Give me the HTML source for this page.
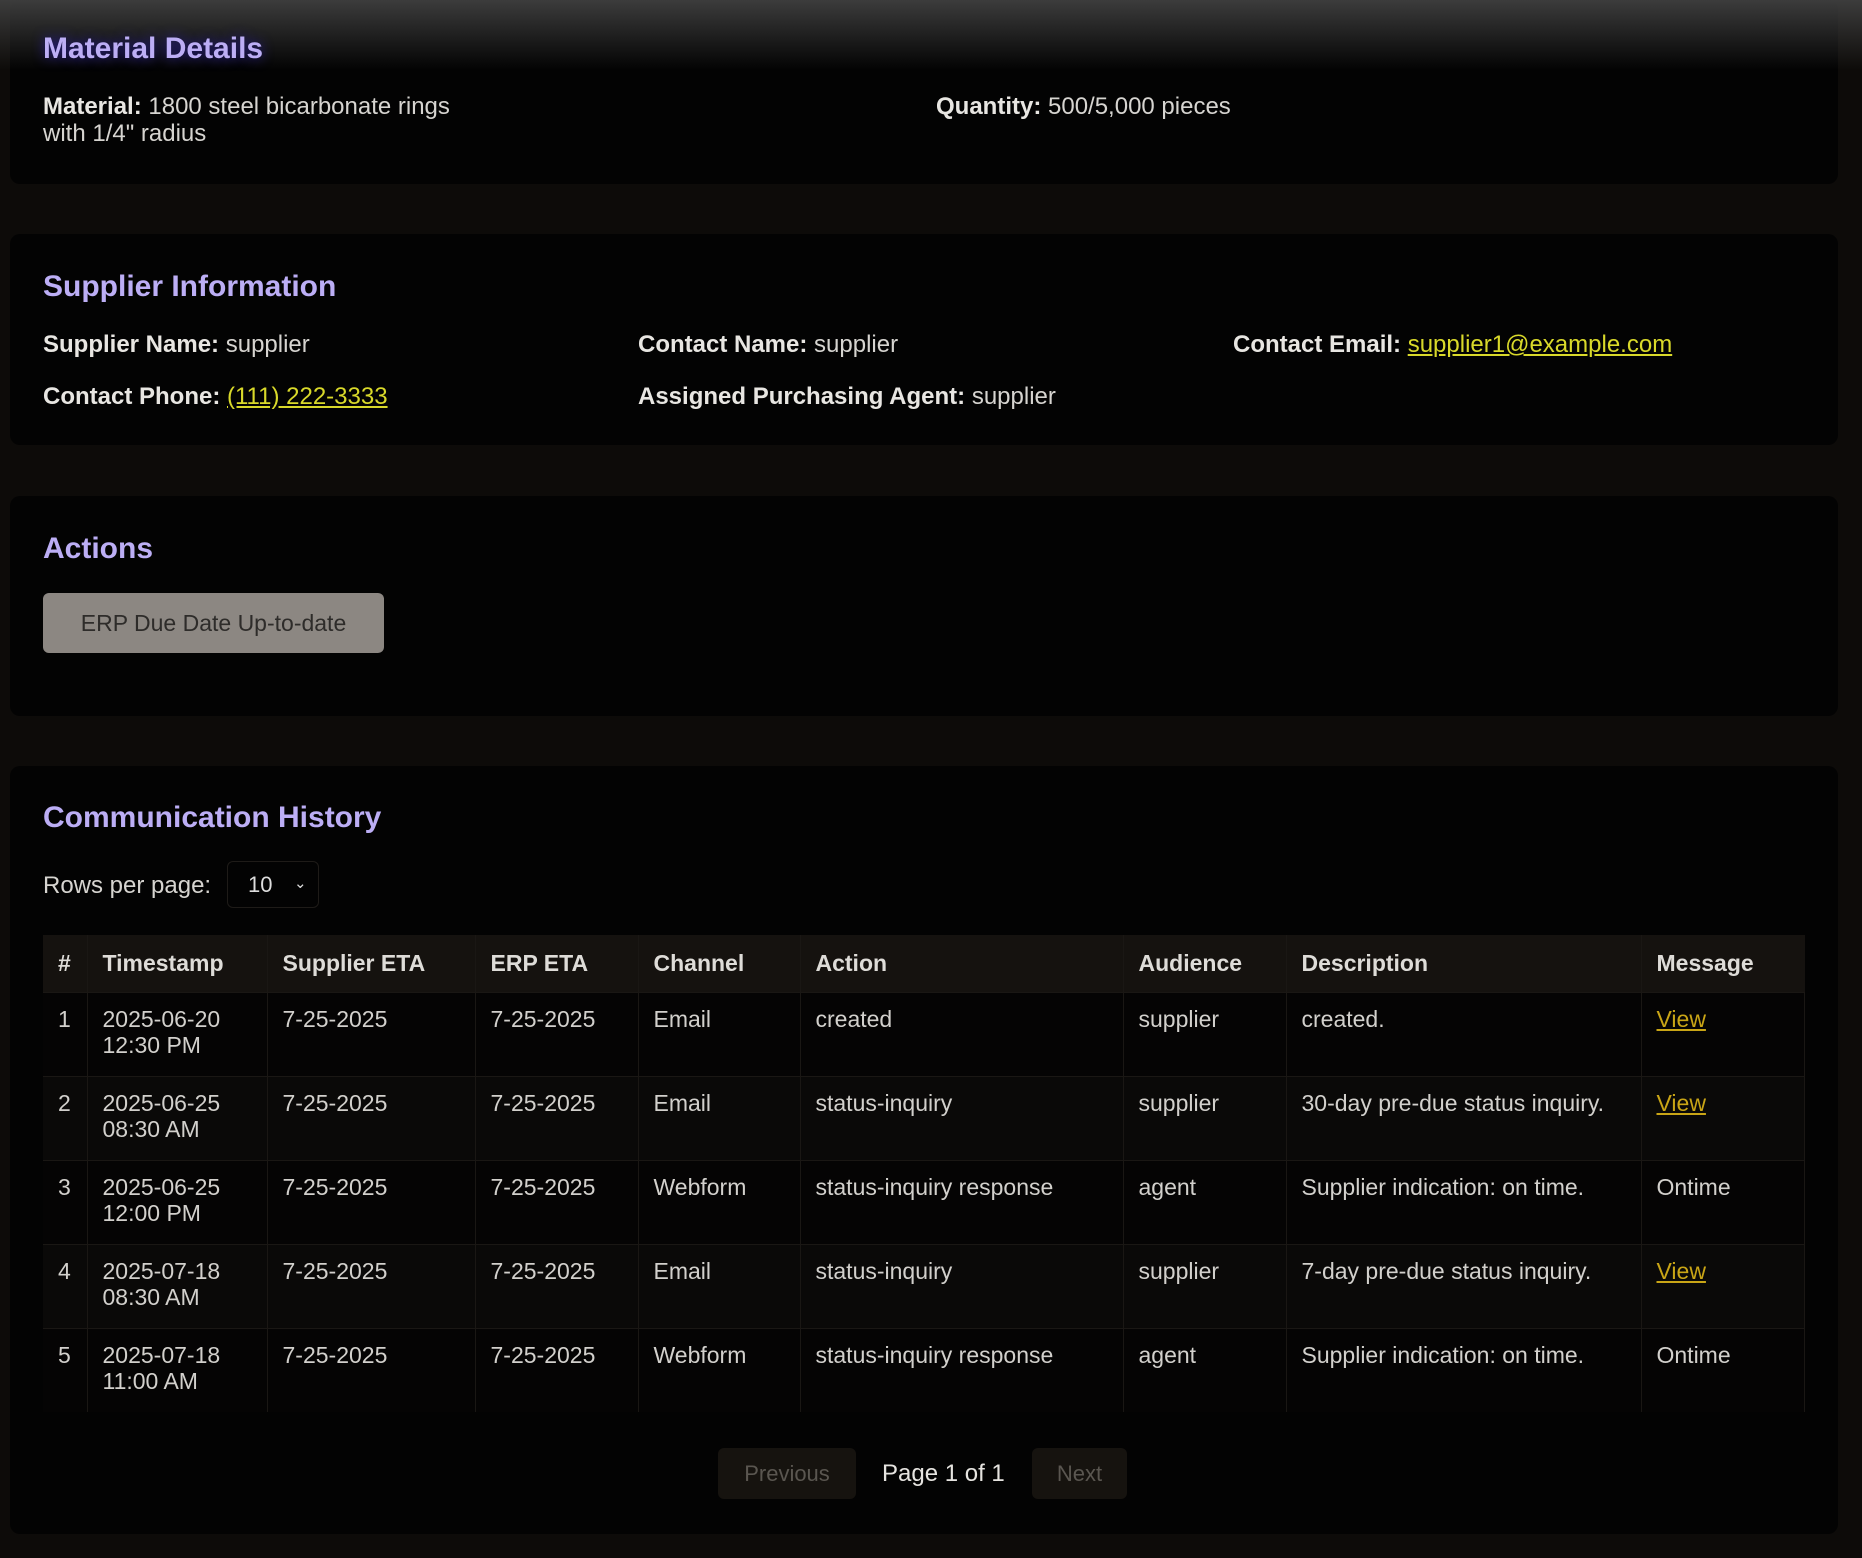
<!DOCTYPE html>
<html><head><meta charset="utf-8"><style>
*{margin:0;padding:0;box-sizing:border-box}
body{width:1862px;height:1558px;background:#0d0b09;font-family:"Liberation Sans",sans-serif;color:#d8d6d2;position:relative;overflow:hidden}
.top{position:absolute;left:0;top:0;width:1862px;height:70px;background:linear-gradient(rgba(60,60,60,1),rgba(3,3,3,0))}
.card{position:absolute;left:10px;width:1828px;background:#030303;border-radius:10px}
.t{position:absolute;font-size:30px;font-weight:bold;color:#bcaef5}
.x{position:absolute;font-size:24px;color:#d6d4d0;white-space:nowrap}
.x b{color:#e8e6e2}
a{color:#d9d92a;text-decoration:underline}
table{position:absolute;left:43px;top:935px;width:1762px;border-collapse:collapse;font-size:23px}
th{background:#15120f;text-align:left;font-weight:bold;color:#dedcd8;height:57px;padding:0 0 0 15px;border-right:1px solid #1a1714}
td{vertical-align:top;padding:13px 0 0 15px;height:84px;line-height:26px;color:#d2d0cc;border-right:1px solid #1a1714;border-top:1px solid #1a1714}
tr.a td{background:#050404}
tr.b td{background:#0a0908}
td a{color:#c9a516}
</style></head><body>
<div class="card" style="top:0;height:184px"></div>
<div class="top"></div>
<div class="t" style="left:43px;top:32px;text-shadow:0 0 12px #2a1f9a">Material Details</div>
<div class="x" style="left:43px;top:93px;line-height:27px">
<b>Material:</b> 1800 steel bicarbonate rings<br>with 1/4" radius</div>
<div class="x" style="left:936px;top:93px"><b>Quantity:</b> 500/5,000 pieces</div>

<div class="card" style="top:234px;height:211px"></div>
<div class="t" style="left:43px;top:270px">Supplier Information</div>
<div class="x" style="left:43px;top:331px"><b>Supplier Name:</b> supplier</div>
<div class="x" style="left:638px;top:331px"><b>Contact Name:</b> supplier</div>
<div class="x" style="left:1233px;top:331px"><b>Contact Email:</b> <a>supplier1@example.com</a></div>
<div class="x" style="left:43px;top:383px"><b>Contact Phone:</b> <a>(111) 222-3333</a></div>
<div class="x" style="left:638px;top:383px"><b>Assigned Purchasing Agent:</b> supplier</div>

<div class="card" style="top:496px;height:220px"></div>
<div class="t" style="left:43px;top:532px">Actions</div>
<div style="position:absolute;left:43px;top:593px;width:341px;height:60px;background:#8c8782;border-radius:6px;color:#2e2c2a;font-size:23px;line-height:60px;text-align:center">ERP Due Date Up-to-date</div>

<div class="card" style="top:766px;height:768px"></div>
<div class="t" style="left:43px;top:801px">Communication History</div>
<div class="x" style="left:43px;top:872px">Rows per page:</div>
<div style="position:absolute;left:227px;top:861px;width:92px;height:47px;border:1px solid #1e1b18;border-radius:6px;font-size:22px;line-height:45px;padding-left:20px;color:#ddd">10 <span style="position:absolute;left:66px;top:-1px;font-size:15px">&#8964;</span></div>
<table>
<tr><th style="width:44px">#</th><th style="width:180px">Timestamp</th><th style="width:208px">Supplier ETA</th><th style="width:163px">ERP ETA</th><th style="width:162px">Channel</th><th style="width:323px">Action</th><th style="width:163px">Audience</th><th style="width:355px">Description</th><th style="border-right:none">Message</th></tr>
<tr class="a"><td>1</td><td>2025-06-20<br>12:30 PM</td><td>7-25-2025</td><td>7-25-2025</td><td>Email</td><td>created</td><td>supplier</td><td>created.</td><td><a>View</a></td></tr>
<tr class="b"><td>2</td><td>2025-06-25<br>08:30 AM</td><td>7-25-2025</td><td>7-25-2025</td><td>Email</td><td>status-inquiry</td><td>supplier</td><td>30-day pre-due status inquiry.</td><td><a>View</a></td></tr>
<tr class="a"><td>3</td><td>2025-06-25<br>12:00 PM</td><td>7-25-2025</td><td>7-25-2025</td><td>Webform</td><td>status-inquiry response</td><td>agent</td><td>Supplier indication: on time.</td><td>Ontime</td></tr>
<tr class="b"><td>4</td><td>2025-07-18<br>08:30 AM</td><td>7-25-2025</td><td>7-25-2025</td><td>Email</td><td>status-inquiry</td><td>supplier</td><td>7-day pre-due status inquiry.</td><td><a>View</a></td></tr>
<tr class="a"><td>5</td><td>2025-07-18<br>11:00 AM</td><td>7-25-2025</td><td>7-25-2025</td><td>Webform</td><td>status-inquiry response</td><td>agent</td><td>Supplier indication: on time.</td><td>Ontime</td></tr>
</table>
<div style="position:absolute;left:718px;top:1448px;width:138px;height:51px;background:#16130f;border-radius:6px;color:#5a5650;font-size:22px;line-height:51px;text-align:center">Previous</div>
<div class="x" style="left:882px;top:1460px;color:#e6e4e0">Page 1 of 1</div>
<div style="position:absolute;left:1032px;top:1448px;width:95px;height:51px;background:#16130f;border-radius:6px;color:#5a5650;font-size:22px;line-height:51px;text-align:center">Next</div>
</body></html>
